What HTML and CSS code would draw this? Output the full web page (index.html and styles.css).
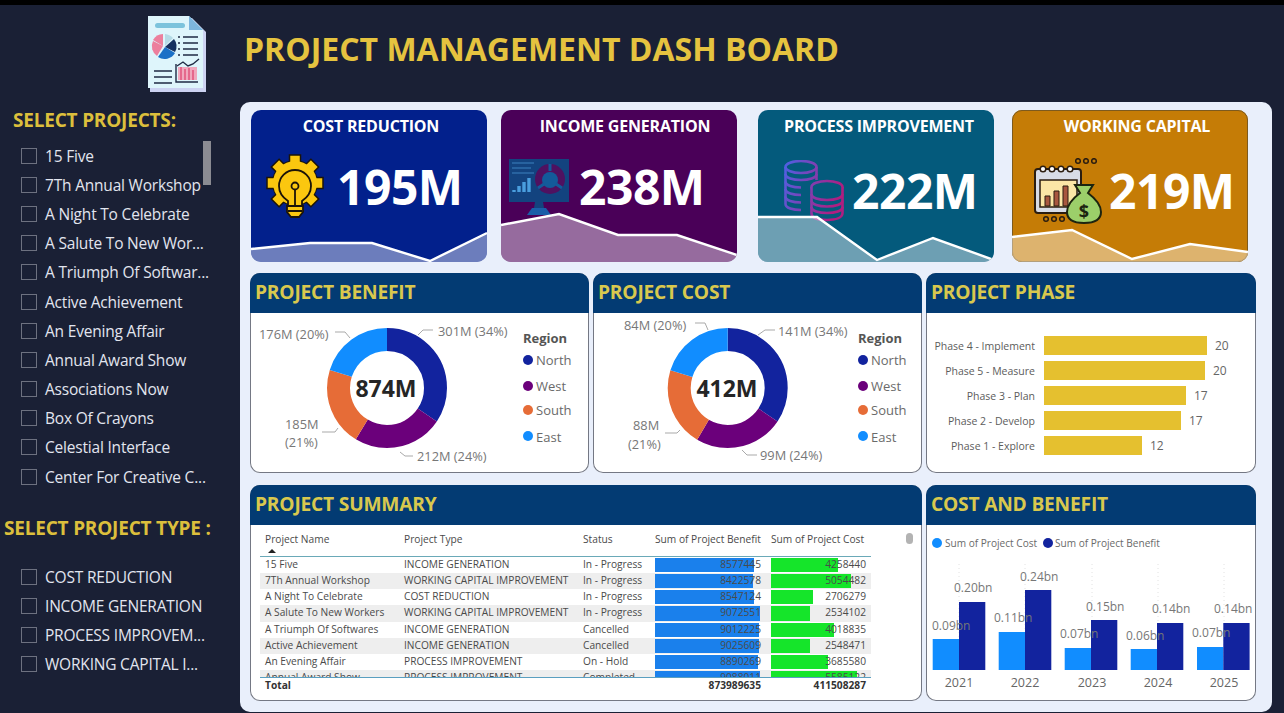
FILE: index.html
```html
<!DOCTYPE html>
<html lang="en">
<head>
    <meta charset="UTF-8">
    <meta name="viewport" content="width=device-width, initial-scale=1.0">
    <title>Project Management Dash Board</title>
    <link rel="stylesheet" href="styles.css">
</head>
<body>
    <div class="topbar"></div>
    <div class="page">
        <div class="brand">
            <svg class="logo" viewBox="0 0 60 80" aria-hidden="true">
                <path d="M4 4H46L60 18V78H4Z" fill="#cdd3f2"/>
                <path d="M2 2H43L57 16V74H2Z" fill="#def5fb"/>
                <path d="M43 2L57 16H43Z" fill="#7db6de"/>
                <rect x="9" y="9" width="30" height="5" rx="2.5" fill="#7cc3dc"/>
                <path d="M17 32L17 20A12 12 0 0 0 7 26Z" fill="#ec7f9d"/>
                <path d="M7 27L17 32L11 42A12 12 0 0 1 7 27Z" fill="#ec7f9d"/>
                <path d="M19 20A12 12 0 0 1 27 24L19 32Z" fill="#b5dbe6"/>
                <path d="M28 25A12 12 0 0 1 29 38L19 33Z" fill="#15305f"/>
                <path d="M29 39A12 12 0 0 1 12 43L19 33Z" fill="#1a70c6"/>
                <path d="M37 23H52M37 29H52M37 35H52M37 41H52" stroke="#1f2a44" stroke-width="1.6"/>
                <path d="M32 23H34M32 29H34M32 35H34M32 41H34" stroke="#1f2a44" stroke-width="1.6"/>
                <path d="M8 57H26M8 63H26M8 69H26" stroke="#1f2a44" stroke-width="1.6"/>
                <path d="M30 50V68H52" fill="none" stroke="#1f2a44" stroke-width="1.4"/>
                <path d="M32 53H51V66H32Z" fill="#f0a8bd"/>
                <path d="M34 53V66H36V53ZM38 55V66H40V55ZM42 54V66H44V54ZM46 56V66H48V56Z" fill="#e5688c"/>
                <path d="M31 52L37 48L42 52L47 50L53 45" fill="none" stroke="#1f2a44" stroke-width="1.4"/>
            </svg>
        </div>
        <h1 class="title">PROJECT MANAGEMENT DASH BOARD</h1>

        <aside class="sidebar">
            <h3 class="slicer-title">SELECT PROJECTS:</h3>
            <div class="slicer">
                <div class="slicer-thumb"></div>
                <div class="slicer-item"><span class="box"></span>15 Five</div>
                <div class="slicer-item"><span class="box"></span>7Th Annual Workshop</div>
                <div class="slicer-item"><span class="box"></span>A Night To Celebrate</div>
                <div class="slicer-item"><span class="box"></span>A Salute To New Wor...</div>
                <div class="slicer-item"><span class="box"></span>A Triumph Of Softwar...</div>
                <div class="slicer-item"><span class="box"></span>Active Achievement</div>
                <div class="slicer-item"><span class="box"></span>An Evening Affair</div>
                <div class="slicer-item"><span class="box"></span>Annual Award Show</div>
                <div class="slicer-item"><span class="box"></span>Associations Now</div>
                <div class="slicer-item"><span class="box"></span>Box Of Crayons</div>
                <div class="slicer-item"><span class="box"></span>Celestial Interface</div>
                <div class="slicer-item"><span class="box"></span>Center For Creative C...</div>
            </div>
            <h3 class="slicer-title slicer-title-type">SELECT PROJECT TYPE :</h3>
            <div class="slicer">
                <div class="slicer-item"><span class="box"></span>COST REDUCTION</div>
                <div class="slicer-item"><span class="box"></span>INCOME GENERATION</div>
                <div class="slicer-item"><span class="box"></span>PROCESS IMPROVEM...</div>
                <div class="slicer-item"><span class="box"></span>WORKING CAPITAL I...</div>
            </div>
        </aside>

        <main class="board">
            <div class="kpis">
                <div class="kpi kpi-cost">
                    <div class="kpi-title">COST REDUCTION</div>
                    <div class="kpi-row">
                        <svg class="kpi-icon" viewBox="0 0 60 66" aria-hidden="true">
                            <circle cx="30" cy="29" r="23" fill="#1c1408"/>
                            <g fill="#fbc70f" stroke="#1c1408" stroke-width="1.5">
                                <rect x="24.500" y="1" width="11" height="11"/>
                                <rect x="24.500" y="1" width="11" height="11" transform="rotate(45 30 29)"/>
                                <rect x="24.500" y="1" width="11" height="11" transform="rotate(90 30 29)"/>
                                <rect x="24.500" y="1" width="11" height="11" transform="rotate(135 30 29)"/>
                                <rect x="24.500" y="1" width="11" height="11" transform="rotate(180 30 29)"/>
                                <rect x="24.500" y="1" width="11" height="11" transform="rotate(225 30 29)"/>
                                <rect x="24.500" y="1" width="11" height="11" transform="rotate(270 30 29)"/>
                                <rect x="24.500" y="1" width="11" height="11" transform="rotate(315 30 29)"/>
                            </g>
                            <circle cx="30" cy="29" r="22" fill="#fbc70f"/>
                            <g fill="#fbc70f" stroke="#1c1408" stroke-width="1.800">
                                <path d="M23 47C17 43 14 38 14 32A16 16 0 0 1 46 32C46 38 43 43 37 47V52H23Z"/>
                                <path d="M22 52H38V58L34 63H26L22 58Z"/>
                                <path d="M30 36V52M23 57H37" fill="none"/>
                                <circle cx="30" cy="32" r="3.5"/>
                            </g>
                        </svg>
                        <span class="kpi-value">195M</span>
                    </div>
                    <svg class="spark" viewBox="0 0 236 52" aria-hidden="true">
                        <path d="M0 39L59 33L121 33L179 51L236 23V52H0Z" fill="#fff" fill-opacity=".42"/>
                        <path d="M0 39L59 33L121 33L179 51L236 23" fill="none" stroke="#fff" stroke-width="2.4"/>
                    </svg>
                </div>
                <div class="kpi kpi-income">
                    <div class="kpi-title">INCOME GENERATION</div>
                    <div class="kpi-row">
                        <svg class="kpi-icon" viewBox="0 0 60 56" aria-hidden="true">
                            <rect width="60" height="43" fill="#13437f"/>
                            <path d="M3 4H25M3 9H22M3 14H25" stroke="#27629f" stroke-width="2"/>
                            <path d="M5 33V31M10 33V27M15 33V23M20 33V19" stroke="#4a9ede" stroke-width="3.4" fill="none"/>
                            <circle cx="41" cy="20" r="15" fill="#4f1160"/>
                            <circle cx="41" cy="21" r="8" fill="#135a9a"/>
                            <path d="M41 5V12M29 29L35 25M53 29L47 25" stroke="#135a9a" stroke-width="3"/>
                            <path d="M26 43H34L35 49H25Z" fill="#13437f"/>
                            <path d="M23 49H37L42 56H18Z" fill="#1a5ea8"/>
                        </svg>
                        <span class="kpi-value">238M</span>
                    </div>
                    <svg class="spark" viewBox="0 0 236 52" aria-hidden="true">
                        <path d="M0 15L58 4L117 25L176 25L236 45V52H0Z" fill="#fff" fill-opacity=".42"/>
                        <path d="M0 15L58 4L117 25L176 25L236 45" fill="none" stroke="#fff" stroke-width="2.4"/>
                    </svg>
                </div>
                <div class="kpi kpi-process">
                    <div class="kpi-title">PROCESS IMPROVEMENT</div>
                    <div class="kpi-row">
                        <svg class="kpi-icon" viewBox="0 0 60 62" aria-hidden="true">
                            <defs>
                                <linearGradient id="coin" gradientUnits="userSpaceOnUse" x1="0" y1="0" x2="60" y2="20">
                                    <stop offset="0" stop-color="#4c62e6"/>
                                    <stop offset="1" stop-color="#b01e80"/>
                                </linearGradient>
                            </defs>
                            <g fill="none" stroke="url(#coin)" stroke-width="2.600">
                                <ellipse cx="17" cy="7" rx="15.5" ry="6"/>
                                <path d="M1.500 7V44C1.500 48 9 50 17 50M32.500 7V20"/>
                                <path d="M1.500 14C1.500 18 9 20 17 20S32.500 18 32.500 14M1.500 21.500C1.500 25.500 9 27.500 17 27.500M1.500 29C1.500 33 9 35 17 35M1.500 36.500C1.500 40.500 9 42.500 17 42.500"/>
                                <ellipse cx="43" cy="27" rx="15.500" ry="6" fill="#045a7c"/>
                                <path d="M27.500 27V53C27.500 58 35 60 43 60S58.500 58 58.500 53V27" fill="#045a7c"/>
                                <path d="M27.500 34C27.500 38 35 40 43 40S58.500 38 58.500 34M27.500 40.500C27.500 44.500 35 46.500 43 46.500S58.500 44.500 58.500 40.500M27.500 47C27.500 51 35 53 43 53S58.500 51 58.500 47"/>
                            </g>
                        </svg>
                        <span class="kpi-value">222M</span>
                    </div>
                    <svg class="spark" viewBox="0 0 236 52" aria-hidden="true">
                        <path d="M0 7L59 7L119 50L175 28L236 50V52H0Z" fill="#fff" fill-opacity=".42"/>
                        <path d="M0 7L59 7L119 50L175 28L236 50" fill="none" stroke="#fff" stroke-width="2.4"/>
                    </svg>
                </div>
                <div class="kpi kpi-capital">
                    <div class="kpi-title">WORKING CAPITAL</div>
                    <div class="kpi-row">
                        <svg class="kpi-icon kpi-icon-wide" viewBox="0 0 68 66" aria-hidden="true">
                            <g fill="none" stroke="#2b1d10" stroke-width="1.5">
                                <circle cx="44" cy="3" r="2.300"/>
                                <circle cx="52" cy="3" r="2.300"/>
                                <circle cx="60" cy="3" r="2.300"/>
                                <circle cx="12" cy="61" r="2.300"/>
                                <circle cx="20" cy="61" r="2.300"/>
                                <circle cx="28" cy="61" r="2.300"/>
                            </g>
                            <rect x="1" y="11" width="46" height="44" rx="3" fill="#d8dce6" stroke="#2b1d10" stroke-width="2"/>
                            <g fill="#fff" stroke="#2b1d10" stroke-width="1.500">
                                <circle cx="9" cy="11" r="2.800"/>
                                <circle cx="18" cy="11" r="2.800"/>
                                <circle cx="27" cy="11" r="2.800"/>
                                <circle cx="36" cy="11" r="2.800"/>
                            </g>
                            <rect x="6" y="22" width="37" height="27" fill="#fbe6a6" stroke="#2b1d10" stroke-width="1.500"/>
                            <path d="M11 48V38H16V48ZM20 48V33H25V48ZM29 48V28H34V48Z" fill="#a8573f" stroke="#2b1d10"/>
                            <path d="M41 27L59 27L54 35C62 41 67 47 67 54C67 62 60 65 50 65C40 65 33 62 33 54C33 47 38 41 46 35Z" fill="#9ccf6a" stroke="#1d2410" stroke-width="2"/>
                            <text class="bag-sign" x="50" y="60">$</text>
                        </svg>
                        <span class="kpi-value">219M</span>
                    </div>
                    <svg class="spark" viewBox="0 0 236 52" aria-hidden="true">
                        <path d="M0 27L60 20L120 49L178 34L236 42V52H0Z" fill="#fff" fill-opacity=".42"/>
                        <path d="M0 27L60 20L120 49L178 34L236 42" fill="none" stroke="#fff" stroke-width="2.4"/>
                    </svg>
                </div>
            </div>

            <div class="panels">
                <section class="panel">
                    <h2 class="panel-head">PROJECT BENEFIT</h2>
                    <svg class="chart" viewBox="0 0 339 160" aria-hidden="true">
                        <g transform="rotate(-90 137 75)" fill="none" stroke-width="23">
                            <circle cx="137" cy="75" r="48.5" pathLength="100" stroke="#12239e" stroke-dasharray="34.4 65.6"/>
                            <circle cx="137" cy="75" r="48.5" pathLength="100" stroke="#6b007b" stroke-dasharray="24.3 75.7" stroke-dashoffset="-34.4"/>
                            <circle cx="137" cy="75" r="48.5" pathLength="100" stroke="#e66c37" stroke-dasharray="21.2 78.8" stroke-dashoffset="-58.7"/>
                            <circle cx="137" cy="75" r="48.5" pathLength="100" stroke="#118dff" stroke-dasharray="20.1 79.9" stroke-dashoffset="-79.9"/>
                        </g>
                        <text class="donut-total" x="136" y="84">874M</text>
                        <path class="leader" d="M85 19H95L100 25M168 22L173 17H183M72 119H85L88 115M150 139L155 143H163"/>
                        <text class="donut-label" x="9" y="26">176M (20%)</text>
                        <text class="donut-label" x="188" y="23">301M (34%)</text>
                        <text class="donut-label" x="35" y="116">185M</text>
                        <text class="donut-label" x="35" y="134">(21%)</text>
                        <text class="donut-label" x="167" y="148">212M (24%)</text>
                        <text class="legend-title" x="273" y="30">Region</text>
                        <circle cx="278" cy="47" r="5" fill="#12239e"/>
                        <text class="legend-label" x="286" y="52">North</text>
                        <circle cx="278" cy="73" r="5" fill="#6b007b"/>
                        <text class="legend-label" x="286" y="78">West</text>
                        <circle cx="278" cy="97" r="5" fill="#e66c37"/>
                        <text class="legend-label" x="286" y="102">South</text>
                        <circle cx="278" cy="123" r="5" fill="#118dff"/>
                        <text class="legend-label" x="286" y="129">East</text>
                    </svg>
                </section>

                <section class="panel">
                    <h2 class="panel-head">PROJECT COST</h2>
                    <svg class="chart" viewBox="0 0 329 160" aria-hidden="true">
                        <g transform="rotate(-90 134.700 75)" fill="none" stroke-width="23">
                            <circle cx="134.700" cy="75" r="48.5" pathLength="100" stroke="#12239e" stroke-dasharray="34.4 65.6"/>
                            <circle cx="134.700" cy="75" r="48.5" pathLength="100" stroke="#6b007b" stroke-dasharray="24.1 75.9" stroke-dashoffset="-34.4"/>
                            <circle cx="134.700" cy="75" r="48.5" pathLength="100" stroke="#e66c37" stroke-dasharray="21.3 78.7" stroke-dashoffset="-58.5"/>
                            <circle cx="134.700" cy="75" r="48.5" pathLength="100" stroke="#118dff" stroke-dasharray="20.2 79.8" stroke-dashoffset="-79.8"/>
                        </g>
                        <text class="donut-total" x="134" y="84">412M</text>
                        <path class="leader" d="M102 10H112L115 17M165 22L172 17H182M72 120H84L87 117M149 137L154 142H164"/>
                        <text class="donut-label" x="31" y="17">84M (20%)</text>
                        <text class="donut-label" x="185" y="23">141M (34%)</text>
                        <text class="donut-label" x="40" y="117">88M</text>
                        <text class="donut-label" x="35" y="136">(21%)</text>
                        <text class="donut-label" x="167" y="147">99M (24%)</text>
                        <text class="legend-title" x="265" y="30">Region</text>
                        <circle cx="270" cy="47" r="5" fill="#12239e"/>
                        <text class="legend-label" x="278" y="52">North</text>
                        <circle cx="270" cy="73" r="5" fill="#6b007b"/>
                        <text class="legend-label" x="278" y="78">West</text>
                        <circle cx="270" cy="97" r="5" fill="#e66c37"/>
                        <text class="legend-label" x="278" y="102">South</text>
                        <circle cx="270" cy="123" r="5" fill="#118dff"/>
                        <text class="legend-label" x="278" y="129">East</text>
                    </svg>
                </section>

                <section class="panel">
                    <h2 class="panel-head">PROJECT PHASE</h2>
                    <div class="phases">
                        <div class="phase"><span class="phase-label">Phase 4 - Implement</span><span class="phase-bar" style="width:163px"></span><span class="phase-value">20</span></div>
                        <div class="phase"><span class="phase-label">Phase 5 - Measure</span><span class="phase-bar" style="width:161px"></span><span class="phase-value">20</span></div>
                        <div class="phase"><span class="phase-label">Phase 3 - Plan</span><span class="phase-bar" style="width:142px"></span><span class="phase-value">17</span></div>
                        <div class="phase"><span class="phase-label">Phase 2 - Develop</span><span class="phase-bar" style="width:137px"></span><span class="phase-value">17</span></div>
                        <div class="phase"><span class="phase-label">Phase 1 - Explore</span><span class="phase-bar" style="width:98px"></span><span class="phase-value">12</span></div>
                    </div>
                </section>

                <section class="panel panel-wide">
                    <h2 class="panel-head">PROJECT SUMMARY</h2>
                    <div class="summary">
                        <div class="summary-thumb"></div>
                        <div class="tbl-row tbl-head">
                            <div class="cell">Project Name<span class="sort-arrow"></span></div>
                            <div class="cell">Project Type</div>
                            <div class="cell">Status</div>
                            <div class="cell cell-head-num">Sum of Project Benefit</div>
                            <div class="cell cell-head-num">Sum of Project Cost</div>
                        </div>
                        <div class="tbl-body">
                            <div class="tbl-row">
                                <div class="cell">15 Five</div><div class="cell">INCOME GENERATION</div><div class="cell">In - Progress</div>
                                <div class="cell num"><span class="data-bar blue" style="width:99px"></span><span class="num-text">8577445</span></div>
                                <div class="cell num"><span class="data-bar green" style="width:67px"></span><span class="num-text">4258440</span></div>
                            </div>
                            <div class="tbl-row">
                                <div class="cell">7Th Annual Workshop</div><div class="cell">WORKING CAPITAL IMPROVEMENT</div><div class="cell">In - Progress</div>
                                <div class="cell num"><span class="data-bar blue" style="width:98px"></span><span class="num-text">8422578</span></div>
                                <div class="cell num"><span class="data-bar green" style="width:80px"></span><span class="num-text">5054482</span></div>
                            </div>
                            <div class="tbl-row">
                                <div class="cell">A Night To Celebrate</div><div class="cell">COST REDUCTION</div><div class="cell">In - Progress</div>
                                <div class="cell num"><span class="data-bar blue" style="width:99px"></span><span class="num-text">8547124</span></div>
                                <div class="cell num"><span class="data-bar green" style="width:42px"></span><span class="num-text">2706279</span></div>
                            </div>
                            <div class="tbl-row">
                                <div class="cell">A Salute To New Workers</div><div class="cell">WORKING CAPITAL IMPROVEMENT</div><div class="cell">In - Progress</div>
                                <div class="cell num"><span class="data-bar blue" style="width:105px"></span><span class="num-text">9072551</span></div>
                                <div class="cell num"><span class="data-bar green" style="width:39px"></span><span class="num-text">2534102</span></div>
                            </div>
                            <div class="tbl-row">
                                <div class="cell">A Triumph Of Softwares</div><div class="cell">INCOME GENERATION</div><div class="cell">Cancelled</div>
                                <div class="cell num"><span class="data-bar blue" style="width:104px"></span><span class="num-text">9012225</span></div>
                                <div class="cell num"><span class="data-bar green" style="width:63px"></span><span class="num-text">4018835</span></div>
                            </div>
                            <div class="tbl-row">
                                <div class="cell">Active Achievement</div><div class="cell">INCOME GENERATION</div><div class="cell">Cancelled</div>
                                <div class="cell num"><span class="data-bar blue" style="width:104px"></span><span class="num-text">9025609</span></div>
                                <div class="cell num"><span class="data-bar green" style="width:39px"></span><span class="num-text">2548471</span></div>
                            </div>
                            <div class="tbl-row">
                                <div class="cell">An Evening Affair</div><div class="cell">PROCESS IMPROVEMENT</div><div class="cell">On - Hold</div>
                                <div class="cell num"><span class="data-bar blue" style="width:103px"></span><span class="num-text">8890269</span></div>
                                <div class="cell num"><span class="data-bar green" style="width:57px"></span><span class="num-text">3685580</span></div>
                            </div>
                            <div class="tbl-row">
                                <div class="cell">Annual Award Show</div><div class="cell">PROCESS IMPROVEMENT</div><div class="cell">Completed</div>
                                <div class="cell num"><span class="data-bar blue" style="width:105px"></span><span class="num-text">9088011</span></div>
                                <div class="cell num"><span class="data-bar green" style="width:86px"></span><span class="num-text">5585122</span></div>
                            </div>
                        </div>
                        <div class="tbl-row tbl-total">
                            <div class="cell">Total</div><div class="cell"></div><div class="cell"></div>
                            <div class="cell num"><span class="num-text">873989635</span></div>
                            <div class="cell num"><span class="num-text">411508287</span></div>
                        </div>
                    </div>
                </section>

                <section class="panel">
                    <h2 class="panel-head">COST AND BENEFIT</h2>
                    <svg class="chart" viewBox="0 0 330 176" aria-hidden="true">
                        <circle cx="11" cy="18" r="5" fill="#118dff"/>
                        <text class="col-legend" x="19" y="22">Sum of Project Cost</text>
                        <circle cx="122" cy="18" r="5" fill="#12239e"/>
                        <text class="col-legend" x="129" y="22">Sum of Project Benefit</text>
                        <path class="grid-dots" d="M33 39V145M99 39V145M166 39V145M232 39V145M298 39V145"/>
                        <g fill="#118dff">
                            <rect x="6.700" y="114" width="26.300" height="31"/>
                            <rect x="72.700" y="107" width="26.300" height="38"/>
                            <rect x="138.700" y="123" width="26.300" height="22"/>
                            <rect x="204.700" y="124" width="26.300" height="21"/>
                            <rect x="271" y="122" width="26.300" height="23"/>
                        </g>
                        <g fill="#12239e">
                            <rect x="33" y="77" width="26.300" height="68"/>
                            <rect x="99" y="65" width="26.300" height="80"/>
                            <rect x="165" y="95" width="26.300" height="50"/>
                            <rect x="231" y="98" width="26.300" height="47"/>
                            <rect x="297.300" y="98" width="26.300" height="47"/>
                        </g>
                        <g class="col-label">
                            <text x="6" y="105">0.09bn</text>
                            <text x="28" y="67">0.20bn</text>
                            <text x="68" y="97">0.11bn</text>
                            <text x="94" y="56">0.24bn</text>
                            <text x="134" y="113">0.07bn</text>
                            <text x="160" y="86">0.15bn</text>
                            <text x="200" y="115">0.06bn</text>
                            <text x="226" y="88">0.14bn</text>
                            <text x="266" y="112">0.07bn</text>
                            <text x="288" y="88">0.14bn</text>
                        </g>
                        <g class="col-year">
                            <text x="33" y="162">2021</text>
                            <text x="99" y="162">2022</text>
                            <text x="166" y="162">2023</text>
                            <text x="232" y="162">2024</text>
                            <text x="298" y="162">2025</text>
                        </g>
                    </svg>
                </section>
            </div>
        </main>
    </div>
</body>
</html>
```

FILE: styles.css
```css
* {
    box-sizing: border-box;
}
body {
    margin: 0;
    width: 1284px;
    height: 713px;
    overflow: hidden;
    background-color: #1a2035;
    font-family: "Open Sans", "Liberation Sans", sans-serif;
}
.topbar {
    height: 5px;
    background-color: #000;
}
.page {
    display: grid;
    grid-template-columns: 240px 1032px;
    grid-template-rows: 97px 610px;
}
.brand {
    padding: 9px 0 0 146px;
}
.logo {
    display: block;
    width: 60px;
    height: 80px;
}
.title {
    margin: 0;
    padding: 0 0 11px 4px;
    display: flex;
    align-items: center;
    color: #e5c33f;
    font-size: 32px;
    font-weight: 700;
}

/* slicers */
.sidebar {
    padding-top: 6px;
}
.slicer-title {
    margin: 0 0 9px 13px;
    color: #dcbf3c;
    font-size: 19px;
    line-height: 24px;
    font-weight: 700;
    letter-spacing: -0.2px;
}
.slicer-title-type {
    margin: 25px 0 22px 4px;
}
.slicer {
    position: relative;
}
.slicer-thumb {
    position: absolute;
    left: 203px;
    top: 0;
    width: 8px;
    height: 44px;
    background-color: #8b8b92;
}
.slicer-item {
    display: flex;
    align-items: center;
    height: 29.2px;
    padding-left: 21px;
    color: #e2e5ef;
    font-size: 15.5px;
    letter-spacing: -0.2px;
    white-space: nowrap;
}
.box {
    flex: none;
    width: 16px;
    height: 16px;
    margin-right: 8px;
    border: 1px solid #6d7180;
}

/* main board */
.board {
    padding: 8px 10px 0;
    background-color: #e9effb;
    border-radius: 10px;
}
.kpis {
    display: flex;
    padding-left: 1px;
}
.kpi {
    position: relative;
    flex: none;
    width: 236px;
    height: 152px;
    border-radius: 10px;
    overflow: hidden;
    color: #fff;
}
.kpi-cost {
    margin-right: 14px;
    background-color: #02208c;
}
.kpi-income {
    margin-right: 21px;
    background-color: #4a0058;
}
.kpi-process {
    margin-right: 18px;
    background-color: #045a7c;
}
.kpi-capital {
    background-color: #c57c06;
    outline: 1px solid #7d5a1e;
    outline-offset: -1px;
}
.kpi-title {
    padding-top: 5px;
    text-align: center;
    font-size: 16px;
    line-height: 22px;
    font-weight: 700;
    letter-spacing: -0.2px;
}
.kpi-cost .kpi-title {
    padding-left: 4px;
}
.kpi-income .kpi-title {
    padding-left: 12px;
}
.kpi-process .kpi-title {
    padding-left: 6px;
}
.kpi-capital .kpi-title {
    padding-left: 14px;
}
.kpi-row {
    display: flex;
    align-items: center;
    height: 66px;
    margin-top: 17px;
}
.kpi-cost .kpi-row {
    padding-left: 14px;
    gap: 12px;
}
.kpi-income .kpi-row {
    padding-left: 8px;
    gap: 10px;
}
.kpi-process .kpi-row {
    margin-top: 21px;
    padding-left: 26px;
    gap: 8px;
}
.kpi-capital .kpi-row {
    margin-top: 21px;
    padding-left: 22px;
    gap: 7px;
}
.kpi-icon {
    flex: none;
    width: 60px;
}
.kpi-icon-wide {
    width: 68px;
}
.kpi-value {
    font-size: 48px;
    font-weight: 700;
    letter-spacing: -0.5px;
    line-height: 1;
}
.bag-sign {
    fill: #1d2410;
    font-size: 18px;
    font-weight: 700;
    text-anchor: middle;
}
.spark {
    position: absolute;
    left: 0;
    bottom: 0;
    display: block;
    width: 236px;
    height: 52px;
}

/* panels */
.panels {
    display: grid;
    grid-template-columns: 339px 329px 330px;
    grid-template-rows: 200px 216px;
    gap: 12px 4px;
    margin-top: 11px;
}
.panel {
    background-color: #fff;
    border-radius: 10px;
    overflow: hidden;
    box-shadow: inset 0 0 0 1px #747884;
}
.panel-wide {
    grid-column: span 2;
}
.panel-head {
    margin: 0;
    height: 40px;
    padding: 0 0 4px 5px;
    display: flex;
    align-items: center;
    background-color: #033b73;
    color: #d8c84e;
    font-size: 19.2px;
    font-weight: 700;
    letter-spacing: -0.2px;
}
.chart {
    display: block;
    width: 100%;
}
.leader {
    fill: none;
    stroke: #a9a9a9;
    stroke-width: 1;
}
.donut-total {
    fill: #252525;
    font-size: 23px;
    font-weight: 700;
    text-anchor: middle;
}
.donut-label {
    fill: #777;
    font-size: 12.8px;
}
.legend-title {
    fill: #555;
    font-size: 13px;
    font-weight: 700;
}
.legend-label {
    fill: #6a6a6a;
    font-size: 13px;
}

/* phase bars */
.phases {
    display: flex;
    flex-direction: column;
    gap: 6px;
    padding-top: 23px;
}
.phase {
    display: flex;
    align-items: center;
    height: 19px;
}
.phase-label {
    flex: none;
    width: 109px;
    margin-right: 9px;
    text-align: right;
    color: #5c5c5c;
    font-size: 10.5px;
    white-space: nowrap;
}
.phase-bar {
    height: 19px;
    background-color: #e5c02f;
}
.phase-value {
    margin-left: 8px;
    color: #666;
    font-size: 12px;
}

/* summary table */
.summary {
    position: relative;
    width: 621px;
    padding-left: 10px;
}
.summary-thumb {
    position: absolute;
    left: 656px;
    top: 8px;
    width: 7px;
    height: 11px;
    border-radius: 4px;
    background-color: #b3b3b3;
}
.tbl-row {
    display: grid;
    grid-template-columns: 139px 179px 77px 116px 100px;
    height: 16.15px;
    color: #4a4a4a;
    font-size: 10.2px;
    line-height: 15px;
}
.tbl-body .tbl-row:nth-child(even) {
    background-color: #eeeeee;
}
.tbl-head {
    height: 32px;
    padding-top: 7px;
    border-bottom: 1px solid #6aa9b8;
}
.tbl-body {
    height: 120px;
    overflow: hidden;
}
.tbl-total {
    height: 24px;
    border-top: 1px solid #5a9fc0;
    color: #333;
    font-weight: 700;
}
.cell {
    position: relative;
    padding-left: 5px;
    white-space: nowrap;
}
.cell-head-num {
    padding-left: 0;
}
.sort-arrow {
    display: block;
    width: 0;
    margin: 2px 0 0 3px;
    border-left: 4px solid transparent;
    border-right: 4px solid transparent;
    border-bottom: 4px solid #222;
}
.num {
    padding: 0 5px 0 0;
    text-align: right;
}
.tbl-row .cell.num:nth-child(4) {
    padding-right: 10px;
}
.num-text {
    position: relative;
}
.data-bar {
    position: absolute;
    left: 0;
    top: 1px;
    bottom: 1px;
}
.blue {
    background-color: #1a80ec;
}
.green {
    background-color: #15e52a;
}

/* column chart */
.col-legend {
    fill: #6a6a6a;
    font-size: 10.1px;
}
.grid-dots {
    stroke: #e2e2e2;
    stroke-width: 1;
    stroke-dasharray: 1 3;
}
.col-label {
    fill: #777;
    font-size: 12px;
}
.col-year {
    fill: #666;
    font-size: 12.5px;
    text-anchor: middle;
}
```
